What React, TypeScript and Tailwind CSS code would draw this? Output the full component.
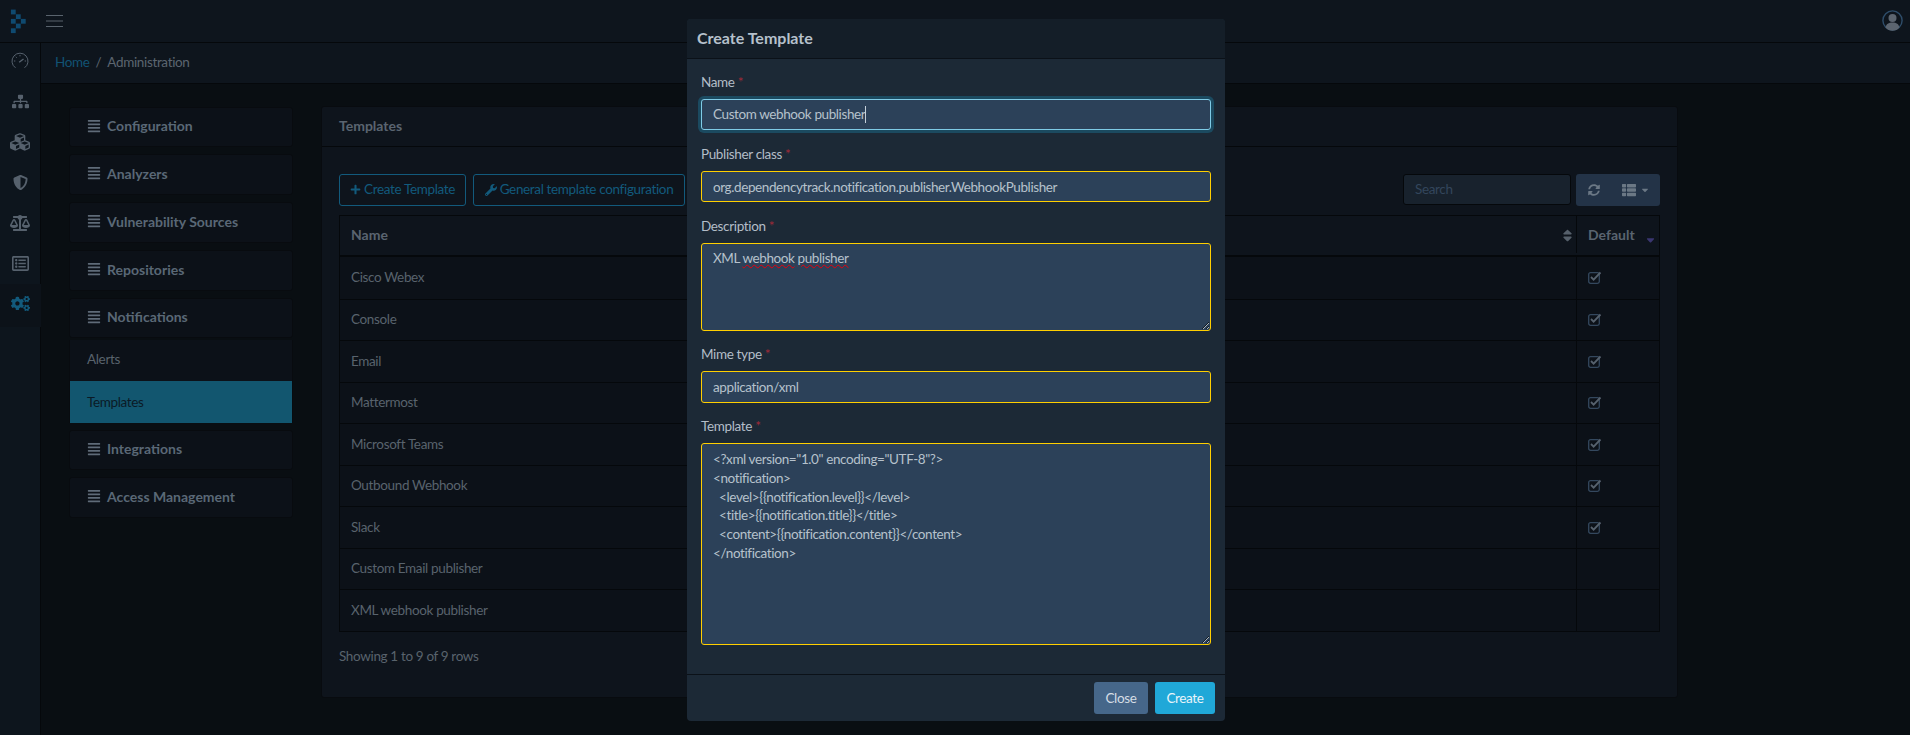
import React from "react";
import { FaAlignJustify, FaPlus, FaWrench, FaSyncAlt, FaThList, FaSitemap, FaCubes, FaShieldAlt, FaBalanceScale, FaRegListAlt, FaCogs, FaSort, FaSortDown, FaCaretDown } from "react-icons/fa";

const font = "font-['Lato','Noto_Sans',sans-serif]";

function Logo() {
  const cells = [[13.3, 8], [18.3, 12.7], [13.3, 17.3], [23.3, 17.3], [18.3, 22], [13.3, 26.7]];
  return (
    <svg width="30" height="34" viewBox="0 0 30 34">
      {cells.map(([x, y], i) => (
        <rect key={i} x={x - 2.4} y={y - 2.4} width="4.8" height="4.8" fill="#0f4a70" />
      ))}
    </svg>
  );
}

function Speedometer() {
  return (
    <svg width="18" height="18" viewBox="0 0 18 18" fill="none" stroke="currentColor" strokeWidth="1">
      <path d="M4.500 15.800A8 8 0 1 1 13.500 15.800" />
      <path d="M8.200 10.200l4.300-3.200" strokeWidth="1.4" />
      <path d="M9 3v1.300M3 9h1.300M13.700 9H15M4.800 4.800l.9.900" />
    </svg>
  );
}

function CheckBox() {
  return (
    <svg width="14" height="13" viewBox="0 0 14 13" fill="none">
      <rect x="0.700" y="1.700" width="10.600" height="10.600" rx="1.800" stroke="#34485e" strokeWidth="1.300" />
      <path d="M3 6l2.600 2.600L12.500 1.500" stroke="#56616d" strokeWidth="1.800" />
    </svg>
  );
}

function NavHead({ label, className }: { label: string; className: string }) {
  return (
    <div className={`flex items-center rounded-[3px] border border-[#080b0f] bg-[#0c1118] pb-[3px] pl-[17px] text-[14px] font-bold tracking-normal text-[#5a6876] ${className}`}>
      <FaAlignJustify className="mr-[6px] h-[14px] w-[14px] text-[#5f6b78]" />
      {label}
    </div>
  );
}

function Field({ label, className, children }: { label: string; className: string; children: React.ReactNode }) {
  return (
    <div className={className}>
      <div className="mb-[7px] h-[20px] leading-[20px] text-[#b3bdc8]">
        {label} <span className="text-[#a02a38]">*</span>
      </div>
      {children}
    </div>
  );
}

const inputCls = "block w-full rounded-[3px] border bg-[#2c4159] px-[11px] text-[13.5px] tracking-[-0.4px] text-[#b6c1cc] outline-none";
const yellow = "border-[#ffcf00]";

const rows = [
  ["Cisco Webex", true],
  ["Console", true],
  ["Email", true],
  ["Mattermost", true],
  ["Microsoft Teams", true],
  ["Outbound Webhook", true],
  ["Slack", true],
  ["Custom Email publisher", false],
  ["XML webhook publisher", false],
] as const;

const template = `<?xml version="1.0" encoding="UTF-8"?>
<notification>
  <level>{{notification.level}}</level>
  <title>{{notification.title}}</title>
  <content>{{notification.content}}</content>
</notification>`;

export default function App() {
  const sideIcons = [
    <Speedometer key="a" />,
    <FaSitemap key="b" size={17} />,
    <FaCubes key="c" size={20} />,
    <FaShieldAlt key="d" size={15} />,
    <FaBalanceScale key="e" size={20} />,
    <FaRegListAlt key="f" size={17} />,
  ];
  return (
    <div className={`relative flex h-[735px] w-[1910px] flex-col overflow-hidden bg-[#090e12] text-[13.5px] tracking-[-0.35px] ${font}`}>
      <header className="flex h-[43px] shrink-0 items-center justify-between border-b border-[#05080b] bg-[#0e151d] pr-[7px]">
        <div className="flex items-center">
          <div className="h-[34px] w-[46px]"><Logo /></div>
          <svg width="17" height="14" viewBox="0 0 17 14" className="text-[#59636d]">
            <path d="M0 1.500h17M0 7h17M0 12.500h17" stroke="currentColor" strokeWidth="1.2" />
          </svg>
        </div>
        <svg width="21" height="21" viewBox="0 0 21 21" className="-mt-[1px]">
          <circle cx="10.500" cy="10.500" r="9.600" fill="#0e151d" stroke="#2e4d6a" strokeWidth="1.4" />
          <circle cx="10.500" cy="8" r="4" fill="#5c6570" />
          <path d="M3.600 17.500c.6-3.600 3-5 6.900-5s6.300 1.400 6.900 5a9 9 0 0 1-13.800 0z" fill="#5c6570" />
        </svg>
      </header>

      <div className="flex min-h-0 flex-1">
        <aside className="flex w-[41px] shrink-0 flex-col border-r border-[#05080b] bg-[#0d151d] text-[#56616d]">
          {sideIcons.map((ic) => (
            <div key={ic.key} className="flex h-[40.5px] items-center justify-center pb-[4px]">{ic}</div>
          ))}
          <div className="-mt-[2px] -mr-px flex h-[42.5px] items-center justify-center bg-[#0c1219] pb-[4px] text-[#125a7c]">
            <FaCogs size={19} />
          </div>
        </aside>

        <div className="flex min-w-0 flex-1 flex-col">
          <div className="flex h-[41px] shrink-0 items-center border-b border-[#05080b] bg-[#0e151d] pb-[2px] pl-[14px]">
            <span className="text-[#115273]">Home</span>
            <span className="mx-[6px] text-[#5c6570]">/</span>
            <span className="text-[#5c6570]">Administration</span>
          </div>

          <main className="flex items-start pt-[23px] pl-[28px]">
            <nav className="mr-[28px] flex w-[224px] shrink-0 flex-col gap-[7px]">
              <NavHead label="Configuration" className="h-[40px]" />
              <NavHead label="Analyzers" className="h-[41px]" />
              <NavHead label="Vulnerability Sources" className="h-[41px]" />
              <NavHead label="Repositories" className="h-[41px]" />
              <div>
                <NavHead label="Notifications" className="h-[40px]" />
                <div className="mt-[2px] border-x border-[#080b0f] bg-[#0c1118]">
                  <div className="flex h-[41px] items-center pb-[3px] pl-[17px] text-[#59636d]">Alerts</div>
                  <div className="flex h-[42px] items-center bg-[#12566f] pl-[17px] text-[#0b1a26]">Templates</div>
                </div>
              </div>
              <NavHead label="Integrations" className="h-[40px]" />
              <NavHead label="Access Management" className="h-[41px]" />
            </nav>

            <section className="-mt-px h-[592px] w-[1357px] rounded-[3px] border border-[#080b0f] bg-[#0e141c]">
              <div className="flex h-[40px] items-center border-b border-[#05080b] pb-[3px] pl-[17px] text-[14px] font-bold tracking-normal text-[#5a6470]">Templates</div>
              <div className="pt-[26px] pr-[17px] pl-[17px]">
                <div className="flex h-[33px] items-center justify-between">
                  <div className="flex gap-[7px] text-[#125a7c]">
                    <div className="flex h-[32px] w-[127px] items-center justify-center gap-[3px] rounded-[3px] border border-[#125a7c]"><FaPlus size={11} />Create Template</div>
                    <div className="flex h-[32px] w-[212px] items-center justify-center gap-[3px] rounded-[3px] border border-[#125a7c]"><FaWrench size={12} />General template configuration</div>
                  </div>
                  <div className="flex items-center gap-[5px]">
                    <div className="flex h-[31px] w-[168px] items-center rounded-[3px] border border-[#05080b] bg-[#18222d] pl-[11px] text-[#33465c]">Search</div>
                    <div className="flex h-[32px] w-[84px] items-center rounded-[3px] bg-[#233347] pl-[12px] text-[#6b7885]">
                      <FaSyncAlt size={12} />
                      <FaThList size={14} className="ml-[22px]" />
                      <FaCaretDown size={10} className="ml-[4px]" />
                    </div>
                  </div>
                </div>

                <div className="mt-[9px] border border-[#05080b]">
                  <div className="flex h-[41px] border-b-2 border-[#05080b] pb-[2px] text-[14px] font-bold tracking-normal text-[#5a6470]">
                    <div className="relative flex flex-1 items-center pl-[11px]">
                      Name
                      <FaSort size={15} className="absolute top-[12px] right-[1px] text-[#56606b]" />
                    </div>
                    <div className="relative flex w-[83px] items-center border-l border-[#05080b] pl-[11px]">
                      Default
                      <FaSortDown size={13} className="absolute top-[15px] right-[2px] text-[#3a3670]" />
                    </div>
                  </div>
                  {rows.map(([name, def], i) => (
                    <div key={name} className={`flex h-[41.5px] text-[#59636d] ${i ? "border-t border-[#05080b]" : ""} bg-[#0c1118]`}>
                      <div className="flex flex-1 items-center pb-[1px] pl-[11px]">{name}</div>
                      <div className="flex w-[83px] items-center border-l border-[#05080b] pl-[11px]">
                        {def && <CheckBox />}
                      </div>
                    </div>
                  ))}
                </div>
                <div className="mt-[14px] text-[#59636d]">Showing 1 to 9 of 9 rows</div>
              </div>
            </section>
          </main>
        </div>
      </div>

      <div className="absolute top-[19px] left-[687px] flex h-[702px] w-[538px] flex-col overflow-hidden rounded-[4px] bg-[#1c2936]">
        <div className="flex h-[40px] shrink-0 items-center border-b border-[#0b1118] bg-[#141e28] pb-[1px] pl-[10px] text-[16px] font-bold tracking-normal text-[#b6c1cc]">Create Template</div>
        <div className="flex-1 px-[14px] pt-[13px]">
          <Field label="Name" className="mb-[14px]">
            <div className={`${inputCls} flex h-[31px] items-center border-[#7fcbe6] shadow-[0_0_0_3px_#1b4a60]`}>
              <span>Custom webhook publisher</span><span className="inline-block h-[17px] w-px bg-[#c5d0da]" />
            </div>
          </Field>
          <Field label="Publisher class" className="mb-[14px]">
            <input readOnly value="org.dependencytrack.notification.publisher.WebhookPublisher" className={`${inputCls} ${yellow} h-[31px]`} />
          </Field>
          <Field label="Description" className="mb-[13px]">
            <div className={`${inputCls} ${yellow} h-[88px] resize overflow-auto py-[4px] leading-[20px]`}>
              XML <span className="underline decoration-red-600 decoration-wavy decoration-1">webhook</span> <span className="underline decoration-red-600 decoration-wavy decoration-1">publisher</span>
            </div>
          </Field>
          <Field label="Mime type" className="mb-[13px]">
            <input readOnly value="application/xml" className={`${inputCls} ${yellow} h-[32px]`} />
          </Field>
          <Field label="Template" className="">
            <textarea readOnly value={template} spellCheck={false} className={`${inputCls} ${yellow} h-[202px] whitespace-pre py-[6px] leading-[18.8px]`} />
          </Field>
        </div>
        <div className="flex h-[47px] shrink-0 items-start justify-end gap-[7px] border-t border-[#0b1118] pt-[7px] pr-[10px]">
          <div className="flex h-[32px] w-[54px] items-center justify-center rounded-[3px] bg-[#46678a] text-[#d5dde5]">Close</div>
          <div className="flex h-[32px] w-[60px] items-center justify-center rounded-[3px] bg-[#20a8d8] text-[#e8f4fa]">Create</div>
        </div>
      </div>
    </div>
  );
}
